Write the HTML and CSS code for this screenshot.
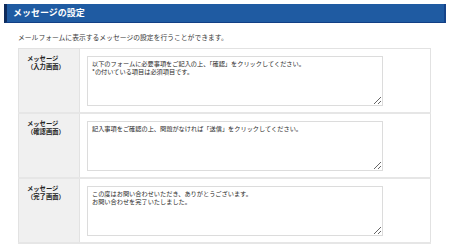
FILE: index.html
```html
<!DOCTYPE html>
<html lang="ja">
<head>
    <meta charset="UTF-8">
    <meta name="viewport" content="width=device-width, initial-scale=1.0">
    <title>メッセージの設定</title>
    <link rel="stylesheet" href="styles.css">
</head>
<body>
    <div class="page">
        <h2 class="title">メッセージの設定</h2>
        <p class="lead">メールフォームに表示するメッセージの設定を行うことができます。</p>

        <!-- Message settings -->
        <table class="settings">
            <tr>
                <th>メッセージ<br>（入力画面）</th>
                <td><textarea class="msg">以下のフォームに必要事項をご記入の上、「確認」をクリックしてください。
*の付いている項目は必須項目です。</textarea></td>
            </tr>
            <tr>
                <th>メッセージ<br>（確認画面）</th>
                <td><textarea class="msg">記入事項をご確認の上、問題がなければ「送信」をクリックしてください。</textarea></td>
            </tr>
            <tr>
                <th>メッセージ<br>（完了画面）</th>
                <td><textarea class="msg">この度はお問い合わせいただき、ありがとうございます。
お問い合わせを完了いたしました。</textarea></td>
            </tr>
        </table>
    </div>
</body>
</html>
```

FILE: styles.css
```css
body {
    margin: 0;
    font-family: "Noto Sans CJK JP", "Noto Sans", sans-serif;
    background-color: #fff;
    color: #333;
}

.page {
    padding: 4px;
}

.title {
    margin: 0;
    height: 18px;
    line-height: 18px;
    padding-left: 6px;
    background-color: #1f5ba2;
    border-left: 3px solid #0f2c5c;
    border-right: 2px solid #15448a;
    border-bottom: 1px solid #123f85;
    color: #fff;
    font-size: 9px;
    font-weight: bold;
}

.lead {
    margin: 9px 0 0 14px;
    font-size: 6.8px;
    line-height: 10px;
    color: #3a3a3a;
}

.settings {
    margin: 6px 0 0 14px;
    width: 413px;
    border-collapse: collapse;
    border: 1px solid #e2e2e2;
}

.settings tr {
    border-bottom: 2px solid #e6e6e6;
}

.settings th {
    width: 52px;
    padding: 6px 0 0 8px;
    vertical-align: top;
    text-align: left;
    background-color: #f0f0f0;
    border-right: 1px solid #e2e2e2;
    font-size: 6.3px;
    line-height: 8px;
    color: #222;
}

.settings td {
    padding: 7px 8px 6px 7px;
    vertical-align: top;
}

.msg {
    display: block;
    box-sizing: border-box;
    width: 296px;
    height: 50px;
    margin: 0;
    padding: 3px 4px;
    border: 1px solid #dcdcdc;
    font-family: "Noto Sans CJK JP", sans-serif;
    font-size: 6.2px;
    line-height: 8px;
    color: #2a2a2a;
}
```
